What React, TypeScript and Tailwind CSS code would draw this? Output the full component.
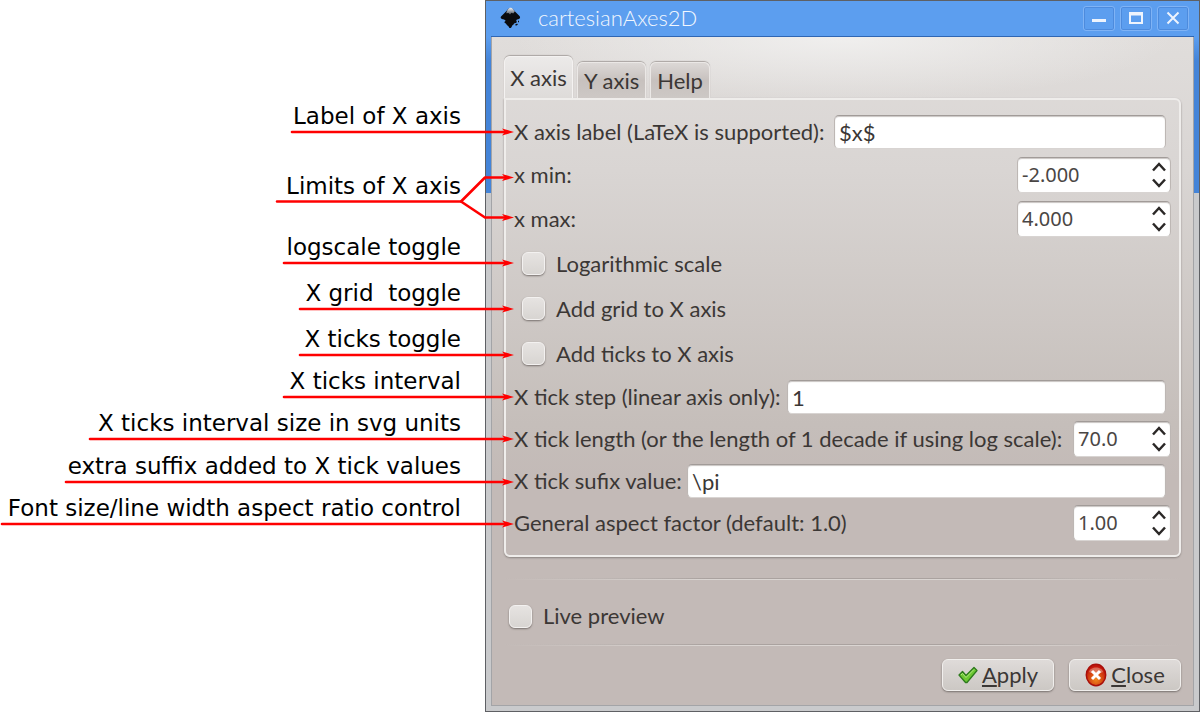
import { useState } from "react";

const annotations = [
  { text: "Label of X axis", height: "h-[130px]" },
  { text: "Limits of X axis", height: "h-[70px]" },
  { text: "logscale toggle", height: "h-[61px]" },
  { text: "X grid  toggle", height: "h-[46px]" },
  { text: "X ticks toggle", height: "h-[46px]" },
  { text: "X ticks interval", height: "h-[42px]" },
  { text: "X ticks interval size in svg units", height: "h-[42px]" },
  { text: "extra suffix added to X tick values", height: "h-[43px]" },
  { text: "Font size/line width aspect ratio control", height: "h-[42px]" },
];

const lines = [
  { x: 291, y: 132 },
  { x: 283, y: 263 },
  { x: 299, y: 309 },
  { x: 299, y: 355 },
  { x: 283, y: 397 },
  { x: 89, y: 439 },
  { x: 65, y: 482 },
  { x: 1, y: 524 },
];

function Arrows() {
  const head = (y: number) => `M514 ${y} L502 ${y - 3.5} L505 ${y} L502 ${y + 3.5} Z`;
  return (
    <svg
      className="pointer-events-none absolute top-0 left-0 z-10"
      width="520"
      height="540"
      viewBox="0 0 520 540"
      fill="none"
      stroke="#ff0000"
      strokeWidth="2.6"
      strokeLinecap="round"
      strokeLinejoin="round"
      aria-hidden="true"
    >
      {lines.map((l) => (
        <g key={l.y}>
          <path d={`M${l.x + 1} ${l.y}H505`} />
          <path d={head(l.y)} fill="#ff0000" stroke="none" />
        </g>
      ))}
      <path d="M277 201.5H461L485 177.500H505" />
      <path d="M461 201.500L485 217.500H505" />
      <path d={head(177.5)} fill="#ff0000" stroke="none" />
      <path d={head(217.5)} fill="#ff0000" stroke="none" />
    </svg>
  );
}

function TextRow({ id, label, labelWidth, value }: { id: string; label: string; labelWidth: string; value: string }) {
  return (
    <div className="flex h-[34px] items-center pr-[5px]">
      <label htmlFor={id} className={`shrink-0 whitespace-nowrap ${labelWidth}`}>
        {label}
      </label>
      <input
        id={id}
        type="text"
        defaultValue={value}
        className="h-[34px] min-w-0 flex-1 rounded-[5px] border border-t-[#a19b98] border-r-[#bdb7b4] border-b-[#d8d4d2] border-l-[#bdb7b4] bg-white px-1 shadow-[inset_0_1px_1px_#c9c5c3] outline-none"
      />
    </div>
  );
}

function SpinRow({
  id,
  label,
  width,
  value,
  step,
  digits,
}: {
  id: string;
  label: string;
  width: string;
  value: number;
  step: number;
  digits: number;
}) {
  const [text, setText] = useState(value.toFixed(digits));
  const change = (delta: number) => setText(((parseFloat(text) || 0) + delta).toFixed(digits));
  return (
    <div className="flex h-9 items-center justify-between">
      <label htmlFor={id} className="whitespace-nowrap">
        {label}
      </label>
      <div
        className={`flex h-9 shrink-0 rounded-[5px] border border-t-[#a19b98] border-r-[#bdb7b4] border-b-[#d8d4d2] border-l-[#bdb7b4] bg-white pr-px shadow-[inset_0_1px_1px_#c9c5c3] ${width}`}
      >
        <input
          id={id}
          type="text"
          inputMode="decimal"
          value={text}
          onChange={(e) => setText(e.target.value)}
          className="min-w-0 flex-1 bg-transparent pl-1 font-['Noto_Sans',sans-serif] text-xl text-[#4a4644] outline-none"
        />
        <div className="flex w-5 shrink-0 flex-col justify-center gap-1">
          <button type="button" aria-label={`Increase ${label}`} onClick={() => change(step)} className="flex h-3 items-center justify-center">
            <svg width="14" height="10" viewBox="0 0 14 10" fill="none" stroke="#2b2827" strokeWidth="2.5">
              <path d="M1 8.500L7 2L13 8.500" />
            </svg>
          </button>
          <button type="button" aria-label={`Decrease ${label}`} onClick={() => change(-step)} className="flex h-3 items-center justify-center">
            <svg width="14" height="10" viewBox="0 0 14 10" fill="none" stroke="#2b2827" strokeWidth="2.5">
              <path d="M1 1.500L7 8L13 1.500" />
            </svg>
          </button>
        </div>
      </div>
    </div>
  );
}

function CheckRow({ label, className }: { label: string; className: string }) {
  return (
    <label className={`flex items-center gap-[11px] ${className}`}>
      <input
        type="checkbox"
        className="size-[23px] shrink-0 appearance-none rounded-[6px] border border-[#f3f1f0] bg-linear-to-b from-[#e6e3e1] to-[#d8d5d2] shadow-[0_1px_2px_#77706d] checked:from-[#8fb4e8] checked:to-[#5f97e6]"
      />
      {label}
    </label>
  );
}

function TitleButton({ label, children }: { label: string; children: React.ReactNode }) {
  return (
    <button
      type="button"
      aria-label={label}
      className="flex h-[25px] w-8 items-center justify-center rounded-[3px] border border-[#7fb3f5] shadow-[inset_0_0_0_1px_#4d8bdd]"
    >
      <svg width="20" height="20" viewBox="0 0 20 20" fill="none" stroke="#eef4fd" strokeWidth="2">
        {children}
      </svg>
    </button>
  );
}

function InkscapeLogo() {
  return (
    <svg width="21" height="22" viewBox="0 0 21 22" aria-hidden="true">
      <defs>
        <linearGradient id="logo-peak" x1="0" y1="0" x2="0" y2="1">
          <stop offset="0" stopColor="#f2f4f8" />
          <stop offset="1" stopColor="#4a5058" />
        </linearGradient>
      </defs>
      <path
        d="M10.500 1C12.500 1 13.500 3 15 4.500L19.500 9C21 11 19.500 12 17 12.500C16 13 16 14 17 15C16.500 16 15 16 14 16.500C14 17.500 12.500 18 12 19C11.500 20.500 11 21 10.200 21C9 21 9 19.500 7.500 18.500C6 17.500 6.500 16.500 5 16C4 15.500 4.500 14.500 5.500 14C5.500 13 4.500 12.700 3 12.300C0.500 11.500 0 10.500 1.500 9L6 4.500C7.500 3 8.500 1 10.500 1Z"
        fill="#0b0b0d"
      />
      <path d="M10.500 0.800C12.500 0.800 13.500 3 14.800 4.500L13.200 6.500L11.500 5.800L10 7.500L8.500 6L6.200 6.300C6.800 4 8.500 0.800 10.500 0.800Z" fill="url(#logo-peak)" />
      <path d="M15.500 18.200L17.500 17.200M18 14.500H19" stroke="#0b0b0d" strokeWidth="1.500" />
    </svg>
  );
}

function Separator() {
  return (
    <div className="h-0.5 bg-[linear-gradient(to_right,transparent,#dad5d2_30%,#dad5d2_70%,transparent)]">
      <div className="h-px bg-[linear-gradient(to_right,transparent,#aaa29f_30%,#aaa29f_70%,transparent)]" />
    </div>
  );
}

const tabs = ["X axis", "Y axis", "Help"];

export default function App() {
  const [active, setActive] = useState(0);
  return (
    <main className="relative flex bg-white">
      <ul className="w-[485px] shrink-0 pr-6 text-right font-['DejaVu_Sans',sans-serif] text-[23px] leading-7 text-black">
        {annotations.map((a) => (
          <li key={a.text} className={`flex items-end justify-end whitespace-pre ${a.height}`}>
            {a.text}
          </li>
        ))}
      </ul>
      <Arrows />
      <section
        aria-label="cartesianAxes2D"
        className="min-w-0 flex-1 border border-[#5e6064] bg-[linear-gradient(#5c9eef_0,#5c9eef_36px,#4484d8_60px,#4484d8_192px,#c9cacc_192px)] px-[5px] pb-[5px] font-['Lato',sans-serif] text-[22px] leading-7 text-[#3b3735]"
      >
        <header className="flex h-9 items-center border-b border-[#2f66b3] pr-[5px] pb-px pl-[9px]">
          <InkscapeLogo />
          <h1 className="flex-1 pl-[17px] font-light text-[#f2f7fe]">cartesianAxes2D</h1>
          <div className="flex gap-[5px]">
            <TitleButton label="Minimize">
              <path d="M3 12.500H17" strokeWidth="3" />
            </TitleButton>
            <TitleButton label="Maximize">
              <path d="M4 5H16V15H4Z M4 6.500H16" />
            </TitleButton>
            <TitleButton label="Close window">
              <path d="M4.500 4.500L15.500 15.500M15.500 4.500L4.500 15.500" />
            </TitleButton>
          </div>
        </header>
        <div className="border-x border-b border-[#a3a4a7] bg-[radial-gradient(ellipse_330px_64px_at_50%_0,#f0efee,transparent),linear-gradient(#e0dddb,#d9d5d3_20%,#c5beba_58%,#c3bab7_66%)] px-3 pt-[19px] pb-[14px]">
          <div role="tablist" className="flex items-end gap-1">
            {tabs.map((t, i) => (
              <button
                key={t}
                type="button"
                role="tab"
                aria-selected={i === active}
                onClick={() => setActive(i)}
                className={
                  i === active
                    ? "h-[42px] w-[69px] rounded-t-[6px] border border-b-0 border-[#f4f2f1] bg-linear-to-b from-[#eceae9] to-[#dedbd9] shadow-[0_-1px_1px_#aaa5a2]"
                    : "h-9 rounded-t-[6px] border border-b-0 border-[#ebe8e6] bg-linear-to-b from-[#dcd8d6] via-[#c7c1be] to-[#cdc8c5] px-1.5 shadow-[0_-1px_1px_#aaa5a2]"
                }
              >
                {t}
              </button>
            ))}
          </div>
          <div role="tabpanel" className="rounded-b-[6px] rounded-tr-[6px] border-2 border-[#efedeb] px-2 pt-[15px] pb-[14px] shadow-[0_1px_2px_#8a8380]">
            <div className="flex flex-col gap-2">
              <TextRow id="x-label" label="X axis label (LaTeX is supported):" labelWidth="w-[320px]" value="$x$" />
              <SpinRow id="x-min" label="x min:" width="w-[154px]" value={-2} step={1} digits={3} />
              <SpinRow id="x-max" label="x max:" width="w-[154px]" value={4} step={1} digits={3} />
              <CheckRow label="Logarithmic scale" className="h-[37px] pl-2" />
              <CheckRow label="Add grid to X axis" className="h-[37px] pl-2" />
              <CheckRow label="Add ticks to X axis" className="h-[37px] pl-2" />
            </div>
            <div className="flex flex-col gap-[7px] pt-2">
              <TextRow id="tick-step" label="X tick step (linear axis only):" labelWidth="w-[273px]" value="1" />
              <SpinRow id="tick-length" label="X tick length (or the length of 1 decade if using log scale):" width="w-[98px]" value={70} step={1} digits={1} />
              <TextRow id="tick-suffix" label="X tick sufix value:" labelWidth="w-[173px]" value="\pi" />
              <SpinRow id="aspect" label="General aspect factor (default: 1.0)" width="w-[98px]" value={1} step={0.1} digits={2} />
            </div>
          </div>
          <div className="pt-[21px]">
            <Separator />
            <CheckRow label="Live preview" className="h-16 pt-2 pl-[5px]" />
            <Separator />
          </div>
          <div className="flex justify-end gap-[15px] pt-[13px]">
            <button
              type="button"
              className="flex h-8 w-[112px] items-center justify-center gap-1 rounded-[6px] border border-[#f1efed] bg-linear-to-b from-[#dfdbd9] to-[#ccc8c4] shadow-[0_1px_2px_#77706d]"
            >
              <svg width="20" height="18" viewBox="0 0 20 18" aria-hidden="true">
                <path d="M1 9L4.500 5.500L8 9.500L16 1.500L19 4.500L9 16.500H7.500Z" fill="#6cc832" stroke="#2d7a1d" strokeWidth="1.300" strokeLinejoin="round" />
                <path d="M3 9L4.500 7.500L8 11.500L16 3.500" fill="none" stroke="#aee67f" strokeWidth="1" />
              </svg>
              <span>
                <u className="underline-offset-2">A</u>pply
              </span>
            </button>
            <button
              type="button"
              className="flex h-8 w-[112px] items-center justify-center gap-1 rounded-[6px] border border-[#f1efed] bg-linear-to-b from-[#dfdbd9] to-[#ccc8c4] shadow-[0_1px_2px_#77706d]"
            >
              <svg width="22" height="24" viewBox="0 0 22 24" aria-hidden="true">
                <defs>
                  <radialGradient id="close-fill" cx="50%" cy="70%" r="60%">
                    <stop offset="0" stopColor="#f08a1c" />
                    <stop offset="1" stopColor="#c3150b" />
                  </radialGradient>
                </defs>
                <ellipse cx="11" cy="12" rx="9.700" ry="10.700" fill="url(#close-fill)" stroke="#a80f0a" strokeWidth="1.500" />
                <path d="M4 9C5 3 17 3 18 9C14 11 8 11 4 9Z" fill="#ffffff" fillOpacity="0.3" />
                <path d="M7 8L15 16M15 8L7 16" stroke="#ffffff" strokeWidth="3" />
              </svg>
              <span>
                <u className="underline-offset-2">C</u>lose
              </span>
            </button>
          </div>
        </div>
      </section>
    </main>
  );
}
